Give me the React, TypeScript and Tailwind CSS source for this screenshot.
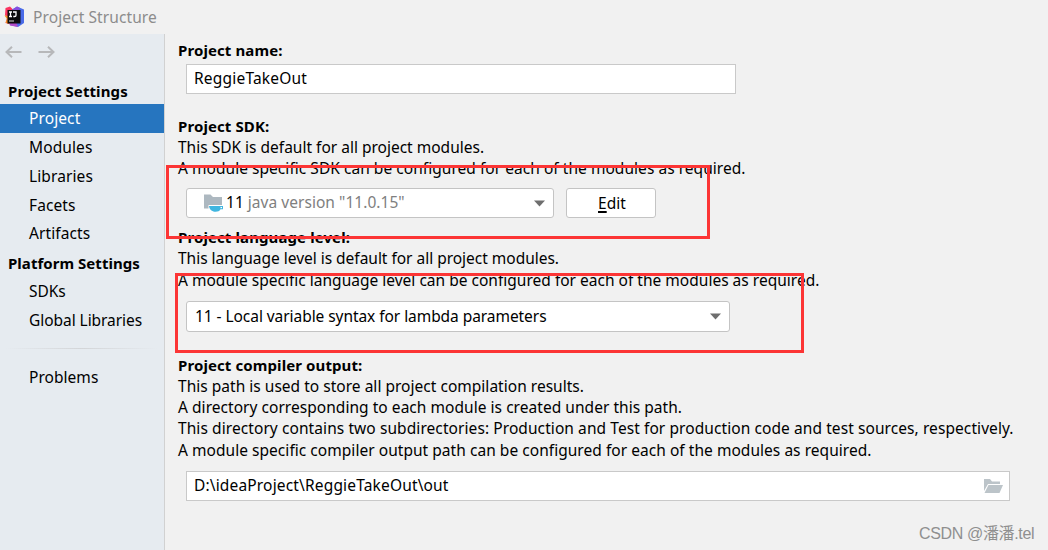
/**
 * Project Structure dialog: settings sidebar on the left, project page on the right.
 */

import type { ReactNode } from "react";
import clsx from "clsx";

const PROJECT_ITEMS = [
  { label: "Project", row: "h-[29px]" },
  { label: "Modules", row: "h-[29px]" },
  { label: "Libraries", row: "h-[29px]" },
  { label: "Facets", row: "h-[29px]" },
  { label: "Artifacts", row: "h-[28px]" },
];

const PLATFORM_ITEMS = [
  { label: "SDKs", row: "h-[29px]" },
  { label: "Global Libraries", row: "h-[29px]" },
];

function AppLogo() {
  return (
    <svg className="h-[22px] w-[22px]" viewBox="0 0 22 22">
      <path d="M1.500 2L6 0.500L9 3.500V12L5 18L1.500 17L3 12L1 9Z" fill="#fb3460" />
      <path d="M0.500 9.500L5 10V18L1.500 16.500L3 13Z" fill="#f7901e" />
      <path d="M8 3.500L13 0.500L20 3.500V17L14 21L6 19L10 12Z" fill="#4a6be8" />
      <path d="M8 4L13 0.500L16 2L14 6H8Z" fill="#8a4de0" />
      <path d="M5 17L12 16L14 21L6 19.500Z" fill="#b04ac8" />
      <rect x="3.500" y="4" width="13" height="13.500" fill="#0a0a0c" />
      <path d="M5 6h3M6.500 6v4.500M5 10.500h3M9 6h3v3.200q0 1.300-1.400 1.300h-1.300" stroke="#fff" strokeWidth="1.3" fill="none" />
      <rect x="5" y="14.500" width="5" height="1" fill="#d8d8d8" />
    </svg>
  );
}

function NavArrow({ flip = false }: { flip?: boolean }) {
  return (
    <svg className={clsx("h-3 w-[17px]", flip && "-scale-x-100")} viewBox="0 0 17 12">
      <path d="M16.5 6H1.5M7 0.8L1.5 6L7 11.2" stroke="#b7b8ba" strokeWidth="2" fill="none" />
    </svg>
  );
}

function SdkIcon() {
  return (
    <svg className="h-[18px] w-5" viewBox="0 0 20 18">
      <path d="M0 0.500h6.500L9 3H18V11H4.500V14.500H0Z" fill="#adb8c0" />
      <path d="M5 12H19V15.200H16.500C15.500 17 14 17.700 11.500 17.700S5.500 16.500 5 12Z" fill="#40b6e0" />
      <rect x="16.500" y="13" width="1.500" height="1.200" fill="#fff" />
    </svg>
  );
}

function FolderIcon() {
  return (
    <svg className="h-[14px] w-[19px]" viewBox="0 0 19 14">
      <path d="M0 0h6l2 2.500H16V5H4L0 12Z" fill="#bcc4c9" />
      <path d="M4.500 6H19L15.500 14H0.500Z" fill="#bcc4c9" />
    </svg>
  );
}

function Caret() {
  return (
    <svg className="h-[7px] w-[11px]" viewBox="0 0 11 7">
      <path d="M0 0.500H11L5.500 6.500Z" fill="#6e6e6e" />
    </svg>
  );
}

function Heading({ children, className }: { children: ReactNode; className?: string }) {
  return (
    <h2 className={clsx("h-[21px] text-[15px] font-bold leading-[21px] tracking-[0.1px]", className)}>{children}</h2>
  );
}

function Line({ children, className }: { children: ReactNode; className?: string }) {
  return <p className={clsx("h-[21px] leading-[21px]", className)}>{children}</p>;
}

function SideItem({ label, row, selected = false }: { label: string; row: string; selected?: boolean }) {
  return (
    <li className={clsx("flex items-center pl-[29px]", row, selected && "bg-[#2675bf] text-white")}>{label}</li>
  );
}

function Sidebar() {
  return (
    <nav className="w-[165px] shrink-0 border-r border-[#d1d1d1] bg-[#e6ebf0]">
      <div className="flex h-[45px] gap-4 pl-[5px] pt-3">
        <NavArrow />
        <NavArrow flip />
      </div>
      <h3 className="mb-px flex h-6 items-center pl-2 text-[15px] font-bold tracking-[0.1px]">Project Settings</h3>
      <ul className="tracking-[0.1px]">
        {PROJECT_ITEMS.map((item) => (
          <SideItem key={item.label} {...item} selected={item.label === "Project"} />
        ))}
      </ul>
      <h3 className="flex h-[29px] items-center pl-2 pt-px text-[15px] font-bold">Platform Settings</h3>
      <ul className="tracking-[-0.05px]">
        {PLATFORM_ITEMS.map((item) => (
          <SideItem key={item.label} {...item} />
        ))}
      </ul>
      <div className="mx-1.5 mt-[13px] h-px bg-linear-to-r from-transparent via-[#d3d5d8] to-transparent" />
      <ul className="mt-[14px]">
        <SideItem label="Problems" row="h-[29px]" />
      </ul>
    </nav>
  );
}

export default function App() {
  return (
    <div className="relative flex h-[550px] w-[1048px] flex-col overflow-hidden whitespace-nowrap bg-[#f1f1f1] font-['Noto_Sans','Noto_Sans_CJK_SC',sans-serif] text-[15.5px] tracking-[0.04px] text-black">
      <header className="flex h-[34px] shrink-0 items-center gap-[7px] pl-1 text-[#8c8c8c]">
        <AppLogo />
        <span className="pt-px tracking-[0.1px]">Project Structure</span>
      </header>
      <div className="flex flex-1">
        <Sidebar />
        <main className="flex-1 pl-[13px] pt-1.5">
          <Heading>Project name:</Heading>
          <div className="ml-2 mt-[3px] flex h-[30px] w-[550px] items-center border border-[#c9c9c9] bg-white pl-[7px] tracking-[0.2px]">
            ReggieTakeOut
          </div>

          <Heading className="mt-[22px]">Project SDK:</Heading>
          <Line className="tracking-[0px]">This SDK is default for all project modules.</Line>
          <Line>A module specific SDK can be configured for each of the modules as required.</Line>
          <div className="ml-2 mt-[9px] flex gap-3">
            <div className="flex h-[30px] w-[368px] items-center rounded-[3px] border border-[#c4c4c4] bg-white pl-[17px] pr-2">
              <SdkIcon />
              <span className="ml-0.5 pb-px">11</span>
              <span className="ml-1 flex-1 pb-px text-[#808080]">java version "11.0.15"</span>
              <Caret />
            </div>
            <button className="h-[30px] w-[90px] rounded-[3px] border border-[#c4c4c4] bg-white pl-0.5 pt-0.5">
              <span className="underline decoration-2 underline-offset-2 [text-decoration-skip-ink:none]">E</span>dit
            </button>
          </div>

          <Heading className="mt-[9px]">Project language level:</Heading>
          <Line className="tracking-[-0.02px]">This language level is default for all project modules.</Line>
          <Line className="mt-px tracking-[0.01px]">
            A module specific language level can be configured for each of the modules as required.
          </Line>
          <div className="ml-2 mt-[10px] flex h-[31px] w-[544px] items-center rounded-[3px] border border-[#c4c4c4] bg-white pl-2 pr-2">
            <span className="flex-1 tracking-[-0.06px]">11 - Local variable syntax for lambda parameters</span>
            <Caret />
          </div>

          <Heading className="mt-[23px]">Project compiler output:</Heading>
          <Line className="tracking-[0.02px]">This path is used to store all project compilation results.</Line>
          <Line>A directory corresponding to each module is created under this path.</Line>
          <Line className="tracking-[0.08px]">
            This directory contains two subdirectories: Production and Test for production code and test sources, respectively.
          </Line>
          <Line className="mt-px">
            A module specific compiler output path can be configured for each of the modules as required.
          </Line>
          <div className="ml-2 mt-[10px] flex h-[30px] w-[824px] items-center border border-[#c9c9c9] bg-white pl-[7px] pr-[6px]">
            <span className="flex-1 pb-px tracking-[0.16px]">D:\ideaProject\ReggieTakeOut\out</span>
            <FolderIcon />
          </div>
        </main>
      </div>

      {/* Annotation frames and watermark lie over the dialog */}
      <div className="absolute left-[166px] top-[165px] h-[74px] w-[544px] border-[3px] border-[#fc3535]" />
      <div className="absolute left-[175px] top-[273px] h-[80px] w-[629px] border-[3px] border-[#fc3535]" />
      <span className="absolute left-[919px] top-[523px] font-['Liberation_Sans','Noto_Sans_CJK_SC',sans-serif] text-[16px] leading-[22px] tracking-[-0.35px] text-[#8f8f8f]">
        CSDN @潘潘.tel
      </span>
    </div>
  );
}
